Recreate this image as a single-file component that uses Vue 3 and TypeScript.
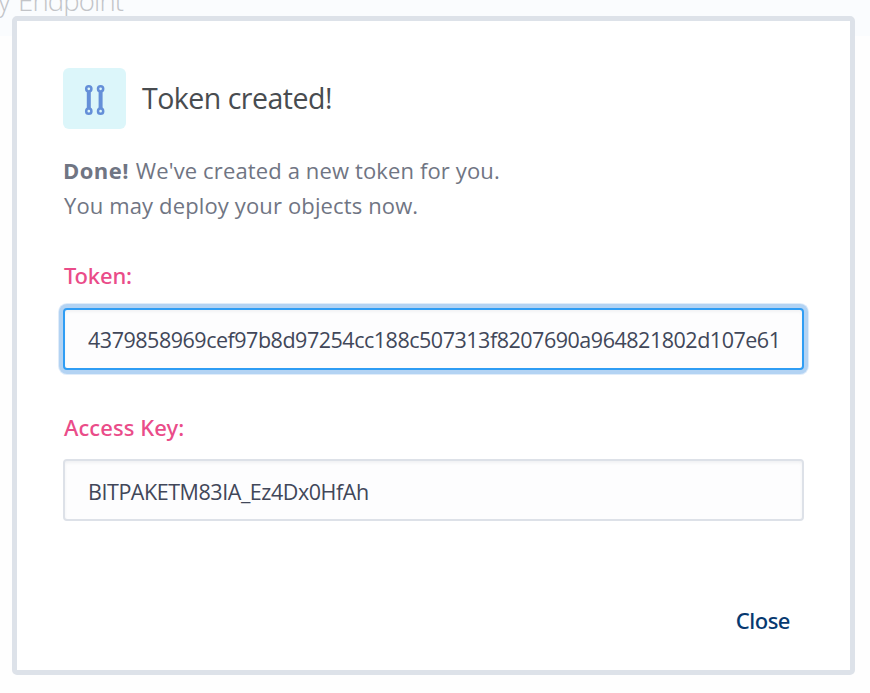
<script setup lang="ts">
import { ref } from 'vue'

interface Credential {
  id: string
  label: string
  value: string
  active: boolean
}

const open = ref<boolean>(true)

const credentials: Credential[] = [
  { id: 'token', label: 'Token:', value: '4379858969cef97b8d97254cc188c507313f8207690a964821802d107e61', active: true },
  { id: 'access-key', label: 'Access Key:', value: 'BITPAKETM83IA_Ez4Dx0HfAh', active: false },
]
</script>

<template>
  <div class="page">
    <header class="page-header"><span class="page-title">y Endpoint</span></header>
    <section v-if="open" class="dialog" role="dialog" aria-labelledby="dialog-title">
      <div class="heading">
        <span class="badge">
          <svg width="22" height="32" viewBox="0 0 22 32" fill="none" stroke="#648fd8">
            <g stroke-width="4">
              <path d="M4.8 7.5V24.5M16.6 7.5V24.5" />
            </g>
            <g stroke-width="2.5" fill="#dcf6fa">
              <circle cx="4.8" cy="4.8" r="2.6" />
              <circle cx="4.8" cy="27.2" r="2.6" />
              <circle cx="16.6" cy="4.8" r="2.6" />
              <circle cx="16.6" cy="27.2" r="2.6" />
            </g>
          </svg>
        </span>
        <h1 id="dialog-title" class="title">Token created!</h1>
      </div>
      <div class="message">
        <p><strong>Done!</strong> <span class="created">We've created a new token for you.</span></p>
        <p class="deploy">You may deploy your objects now.</p>
      </div>
      <div v-for="item in credentials" :key="item.id" class="field">
        <label :for="item.id" :class="['label', item.id]">{{ item.label }}</label>
        <input :id="item.id" :class="['input', item.id, { active: item.active }]" :value="item.value" readonly />
      </div>
      <footer class="actions">
        <button class="close" type="button" @click="open = false">Close</button>
      </footer>
    </section>
  </div>
</template>

<style>
body {
  margin: 0;
  background: #fff;
}
</style>

<style scoped>
.page {
  position: relative;
  width: 870px;
  height: 693px;
  overflow: hidden;
  background: #fefefe;
  font-family: "Open Sans", "Noto Sans", sans-serif;
}
.page-header {
  height: 36px;
  background: #fafcfe;
}
.page-title {
  display: block;
  margin-left: -2px;
  line-height: 36px;
  font-size: 27.5px;
  font-weight: 300;
  color: #c2c4c8;
  letter-spacing: -0.85px;
  word-spacing: 2px;
  white-space: pre;
  transform: translateY(-17px);
}
.dialog {
  position: absolute;
  left: 12px;
  top: 16px;
  box-sizing: border-box;
  width: 843px;
  height: 659px;
  padding: 47px 46px 0;
  border: 5px solid #dde2e9;
  border-radius: 5px;
  background: #fff;
}
.heading {
  display: flex;
  align-items: center;
  gap: 16px;
  height: 61px;
}
.badge {
  display: flex;
  align-items: center;
  justify-content: center;
  width: 63px;
  height: 61px;
  padding-top: 3px;
  box-sizing: border-box;
  border-radius: 6px;
  background: #dcf6fa;
}
.title {
  margin: 0;
  padding-bottom: 2px;
  font-size: 28.5px;
  font-weight: 400;
  color: #484c50;
  letter-spacing: -0.5px;
  white-space: nowrap;
}
.message {
  margin-top: 24px;
  font-size: 22px;
  line-height: 35px;
  color: #707583;
  letter-spacing: 0.13px;
  white-space: nowrap;
}
.message p {
  margin: 0;
}
.message strong {
  font-weight: 700;
  letter-spacing: 0.45px;
}
.created {
  margin-left: 1px;
}
.deploy {
  padding-left: 1px;
}
.field {
  display: flex;
  flex-direction: column;
}
.label {
  height: 32px;
  margin-top: 36px;
  padding-left: 1px;
  line-height: 32px;
  font-family: "Noto Sans", sans-serif;
  font-size: 22px;
  font-weight: 500;
  color: #ea4c89;
}
.label.token {
  letter-spacing: -0.2px;
}
.label.access-key {
  letter-spacing: 0.08px;
}
.input {
  box-sizing: border-box;
  width: 741px;
  height: 62px;
  margin: 17px 0 5px;
  padding: 0 20px 0 23px;
  border: 2px solid #dde1e8;
  border-radius: 4px;
  outline: none;
  background: #fdfdfe;
  box-shadow: inset 0 2px 3px rgba(40, 50, 70, 0.06);
  font-family: inherit;
  font-size: 21.5px;
  color: #414759;
}
.input.token {
  letter-spacing: -0.48px;
}
.input.access-key {
  margin-top: 16px;
  padding-top: 2px;
  letter-spacing: -0.45px;
}
.input.active {
  border-color: #2f9df4;
  box-shadow: inset 0 2px 3px rgba(40, 50, 70, 0.05), 0 0 0 4px #b3d3f3, 0 0 0 5px #dfecfa;
}
.actions {
  display: flex;
  justify-content: flex-end;
  margin-top: 78px;
  padding-right: 14px;
}
.close {
  padding: 0;
  border: 0;
  background: none;
  font-family: "Noto Sans", sans-serif;
  font-size: 22px;
  font-weight: 500;
  line-height: 32px;
  letter-spacing: -0.5px;
  color: #063970;
}
</style>
